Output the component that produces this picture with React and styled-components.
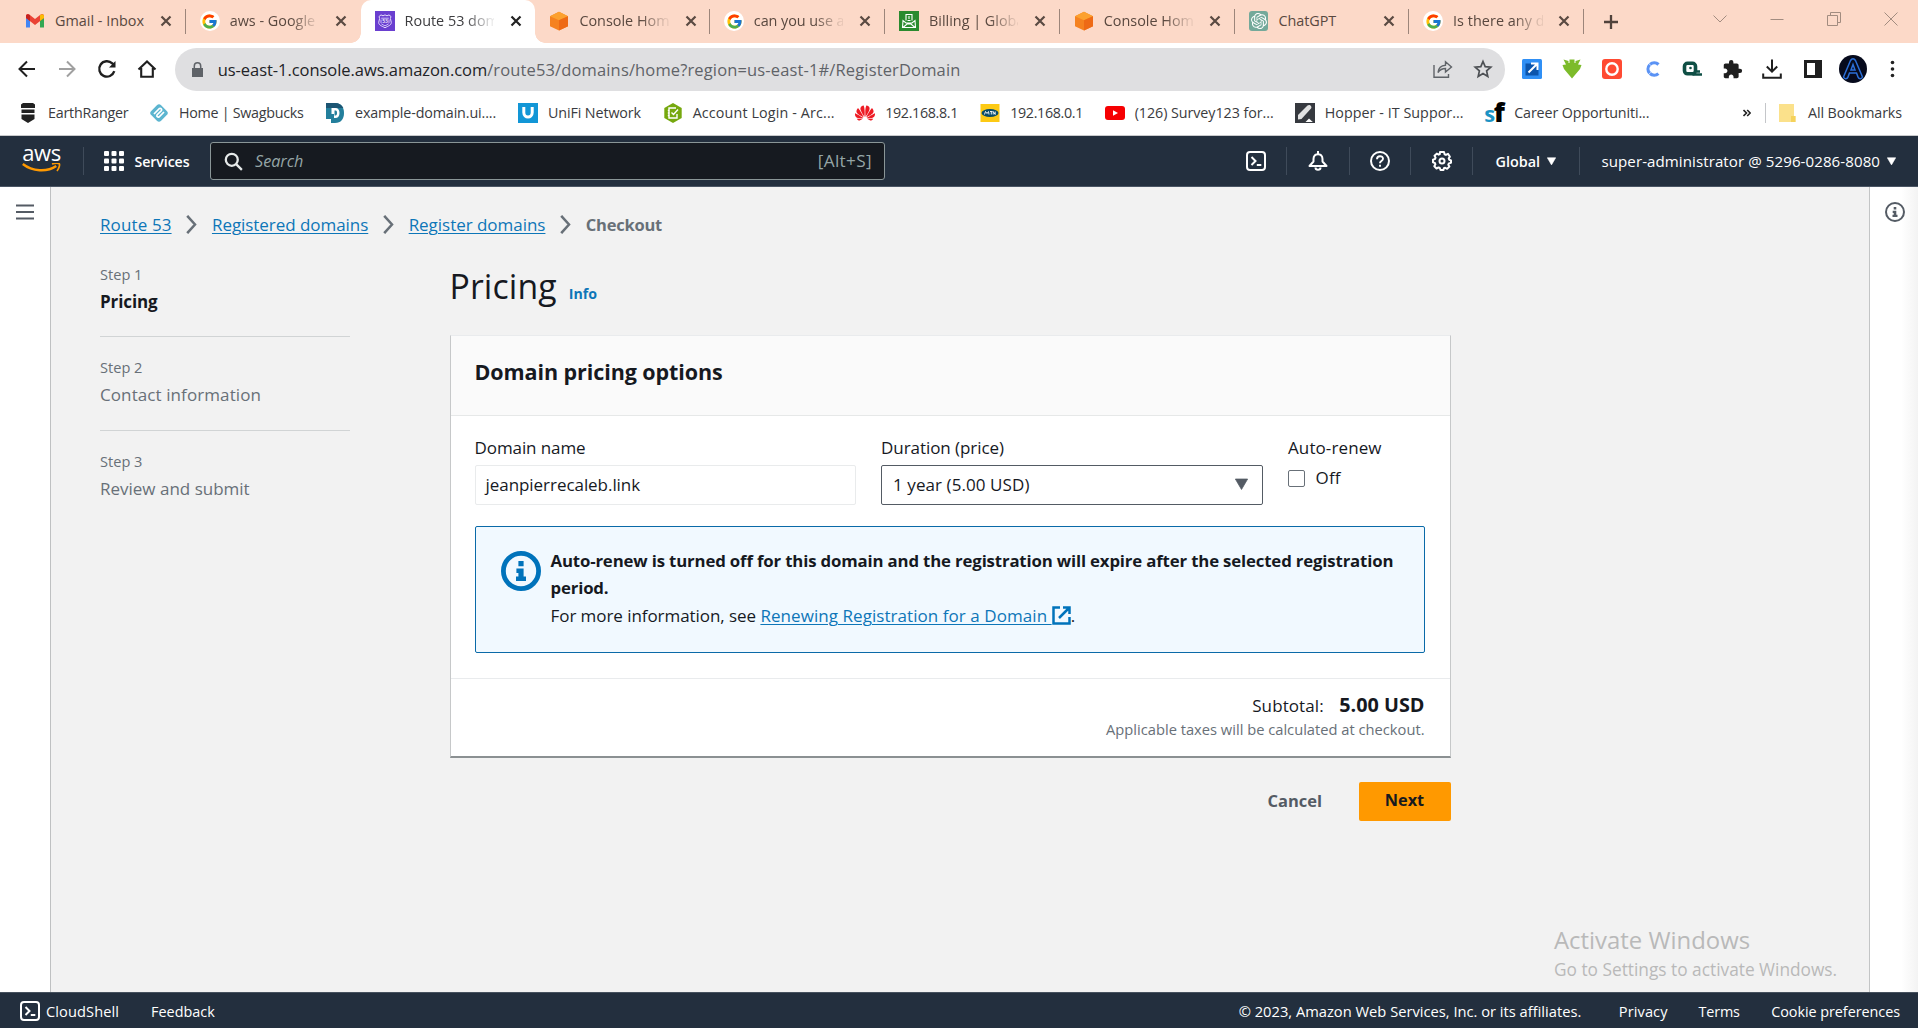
import React from 'react';
import styled, { createGlobalStyle, css } from 'styled-components';
import { FcGoogle } from 'react-icons/fc';
import { SiOpenai, SiHuawei } from 'react-icons/si';
import { MdExtension } from 'react-icons/md';

const Global = createGlobalStyle`
  * { box-sizing: border-box; }
  body { margin: 0; overflow: hidden; font-family: "Open Sans", "Noto Sans", sans-serif; }
  svg { display: block; flex: none; }
`;

const Screen = styled.div`
  width: 1918px;
  height: 1028px;
  display: flex;
  flex-direction: column;
  background: #f2f2f2;
  color: #16191f;
`;

const Text = styled.span`
  font-size: ${(p) => p.$size || 17}px;
  font-weight: ${(p) => p.$weight || 400};
  letter-spacing: ${(p) => p.$ls || 0}px;
  color: ${(p) => p.$color || 'inherit'};
  white-space: pre;
`;

/* ---------- tab strip ---------- */
const TabStrip = styled.div`
  height: 43px;
  flex: none;
  display: flex;
  padding-left: 11px;
  background: #fcd9c8;
`;

const Tab = styled.div`
  position: relative;
  width: 174.8px;
  height: 43px;
  display: flex;
  align-items: center;
  padding: 0 10px 1px 14px;
  color: #59483f;
  ${(p) =>
    p.$active &&
    css`
      background: #fff;
      border-radius: 10px 10px 0 0;
      color: #3c3c3f;
      &::before, &::after {
        content: '';
        position: absolute;
        bottom: 0;
        width: 10px;
        height: 10px;
      }
      &::before { left: -10px; background: radial-gradient(circle at 0 0, transparent 9.5px, #fff 10px); }
      &::after { right: -10px; background: radial-gradient(circle at 100% 0, transparent 9.5px, #fff 10px); }
    `}
  ${(p) =>
    p.$divider &&
    css`
      &::after {
        content: '';
        position: absolute;
        right: 0;
        top: 9px;
        width: 1px;
        height: 25px;
        background: #9c857a;
      }
    `}
`;

const TabTitle = styled.div`
  width: 89.5px;
  margin-left: 10px;
  font-size: 14.4px;
  line-height: 24px;
  letter-spacing: ${(p) => p.$ls || 0}px;
  white-space: nowrap;
  ${(p) => p.$fade && css`mask-image: linear-gradient(90deg, #000 68%, rgba(0, 0, 0, 0.12) 97%);`}
`;

const TabClose = styled.div`
  width: 20px;
  margin-left: 12px;
  display: flex;
  justify-content: center;
  color: ${(p) => (p.$active ? '#222' : '#5a4a42')};
`;

const NewTab = styled.div`
  width: 54px;
  display: flex;
  align-items: center;
  justify-content: center;
  color: #50423b;
`;

const WindowButtons = styled.div`
  margin-left: auto;
  margin-right: -1px;
  height: 37px;
  display: flex;
`;

const WindowButton = styled.div`
  width: 57px;
  display: flex;
  align-items: center;
  justify-content: center;
  color: #a28c80;
`;

/* ---------- toolbar ---------- */
const Toolbar = styled.div`
  height: 52px;
  flex: none;
  display: flex;
  align-items: center;
  padding-left: 7px;
  background: #fff;
`;

const Slot = styled.div`
  width: 40.05px;
  height: 40px;
  display: flex;
  align-items: center;
  justify-content: center;
`;

const AddressBar = styled.div`
  width: 1330px;
  height: 43px;
  margin: 0 7.5px 0 7.500px;
  display: flex;
  align-items: center;
  padding: 0 2px 0 17px;
  border-radius: 22px;
  background: #dfdfe1;
`;

const Address = styled.div`
  flex: 1;
  margin-left: 15px;
  font-size: 16.5px;
  color: #5f6368;
  white-space: nowrap;
  letter-spacing: 0.14px;
`;

const Host = styled.span`
  color: #222327;
  letter-spacing: -0.05px;
`;

/* ---------- bookmarks ---------- */
const Bookmarks = styled.div`
  height: 41px;
  flex: none;
  display: flex;
  align-items: center;
  padding: 0 16px 5px 18px;
  background: #fff;
  border-bottom: 1px solid #c9cacc;
`;

const Bookmark = styled.div`
  width: ${(p) => p.$width}px;
  display: flex;
  align-items: center;
  gap: 10px;
  color: #3a3b40;
`;

const BookmarkEnd = styled.div`
  margin-left: auto;
  display: flex;
  align-items: center;
  color: #3a3b40;
`;

const Rule = styled.div`
  width: 1px;
  height: ${(p) => p.$h}px;
  margin: ${(p) => p.$m || 0};
  background: ${(p) => p.$color};
`;

const SfLogo = styled.div`
  width: 20px;
  font: 700 22px/20px "Open Sans", sans-serif;
  letter-spacing: -1.5px;
  color: #1b93c4;
  white-space: nowrap;
  b { color: #000; font-size: 27px; letter-spacing: 0; }
`;

/* ---------- console header ---------- */
const ConsoleHeader = styled.header`
  height: 51px;
  flex: none;
  display: flex;
  align-items: center;
  background: #232f3e;
  border-bottom: 1px solid #4a5564;
  color: #fff;
`;

const AwsLogo = styled.div`
  width: 39px;
  margin-left: 22px;
  display: flex;
  flex-direction: column;
  align-items: center;
  span { font-size: 22px; line-height: 15px; font-weight: 500; letter-spacing: -0.4px; transform: translateY(-3px); }
`;

const Services = styled.div`
  width: 86px;
  margin-left: 19.5px;
  display: flex;
  align-items: center;
  gap: 11px;
`;

const Search = styled.div`
  width: 675px;
  height: 38px;
  margin-left: 20.5px;
  display: flex;
  align-items: center;
  padding: 0 12px 0 13px;
  border: 1px solid #8a9697;
  border-radius: 3px;
  background: #161a20;
  color: #95a5a6;
  i { flex: 1; margin-left: 12px; font-size: 16.2px; }
  span, i { margin-top: -1px; }
`;

const HeaderTools = styled.div`
  margin-left: auto;
  display: flex;
  align-items: center;
`;

const Tool = styled.div`
  width: ${(p) => p.$width}px;
  display: flex;
  align-items: center;
  justify-content: center;
  gap: 7px;
`;

/* ---------- page ---------- */
const Page = styled.div`
  flex: 1;
  display: flex;
  min-height: 0;
`;

const Rail = styled.aside`
  width: ${(p) => (p.$right ? 49 : 51)}px;
  flex: none;
  display: flex;
  justify-content: center;
  padding-top: ${(p) => (p.$right ? 15 : 17)}px;
  ${(p) =>
    p.$right
      ? css`
          padding-left: 2px;
          border-left: 1px solid #c3c5c6;
          background: linear-gradient(90deg, #fff 65%, #f3f3f3 100%);
        `
      : css`
          border-right: 1px solid #bfc1c2;
          background: #fff;
        `}
`;

const Content = styled.main`
  flex: 1;
  padding: 24px 0 0 49px;
`;

const Breadcrumbs = styled.nav`
  height: 26px;
  display: flex;
  align-items: center;
  gap: 14.7px;
`;

const Link = styled.a`
  color: #0d76b8;
  letter-spacing: ${(p) => p.$ls || 0}px;
  text-decoration: underline;
  text-decoration-thickness: 1px;
  text-underline-offset: 2px;
  white-space: pre;
  font-size: 17px;
`;

const Columns = styled.div`
  display: flex;
`;

const Steps = styled.ol`
  width: 250px;
  margin: 23.5px 0 0;
  padding: 0;
  list-style: none;
`;

const Step = styled.li`
  padding-top: ${(p) => (p.$first ? 0 : 16.5)}px;
  height: ${(p) => (p.$first ? 76.5 : 94)}px;
  border-bottom: ${(p) => (p.$last ? 0 : 1)}px solid #d1d4d5;
  display: flex;
  flex-direction: column;
  span { line-height: 27.5px; }
`;

const Main = styled.section`
  width: 1001px;
  margin-left: 99.5px;
`;

const Title = styled.div`
  height: 97.5px;
  padding-top: 27px;
  display: flex;
  align-items: baseline;
  gap: 12px;
  line-height: 45px;
`;

const Card = styled.div`
  height: 423px;
  display: flex;
  flex-direction: column;
  background: #fff;
  border: 1px solid #c6c8c9;
  border-top-color: #e9ebed;
  border-bottom: 2px solid #8b9092;
`;

const CardHeader = styled.div`
  height: 80px;
  display: flex;
  align-items: center;
  padding: 0 24px 7px;
  background: #fafafa;
  border-bottom: 1px solid #e6e8e8;
`;

const Fields = styled.div`
  display: flex;
  gap: 25px;
  padding: 18.5px 24px 0;
`;

const Field = styled.div`
  width: ${(p) => p.$width}px;
  display: flex;
  flex-direction: column;
  > span { line-height: 27px; }
`;

const Input = styled.div`
  height: 40px;
  margin-top: 4px;
  display: flex;
  align-items: center;
  justify-content: space-between;
  padding: 0 14px 1px ${(p) => (p.$select ? 11 : 10)}px;
  border: 1px solid ${(p) => (p.$select ? '#545b64' : '#e9ebec')};
  border-radius: 2px;
`;

const Check = styled.div`
  display: flex;
  align-items: center;
  gap: 10.5px;
  height: 27px;
  margin-top: 3px;
`;

const CheckBox = styled.div`
  width: 17px;
  height: 17px;
  border: 1px solid #687078;
  border-radius: 2px;
  margin-top: 2px;
`;

const Alert = styled.div`
  height: 127px;
  margin: 20.5px 24.5px 25px 24px;
  display: flex;
  gap: 10px;
  padding: 20px 25px;
  background: #f1f9ff;
  border: 1px solid #0a6aa8;
  border-radius: 2px;
  > svg { margin-top: 4px; }
`;

const AlertBody = styled.div`
  display: flex;
  flex-direction: column;
  span, a { line-height: 27.5px; }
`;

const AlertLine = styled.div`
  display: flex;
  align-items: center;
  height: 27.5px;
`;

const CardFooter = styled.div`
  flex: 1;
  display: flex;
  flex-direction: column;
  align-items: flex-end;
  padding: 12.5px 25px 0;
  border-top: 1px solid #e9ebed;
`;

const Total = styled.div`
  display: flex;
  align-items: baseline;
  gap: 15.5px;
  height: 28px;
  line-height: 28px;
`;

const Actions = styled.div`
  margin-top: 24px;
  display: flex;
  justify-content: flex-end;
  align-items: center;
  gap: 36.5px;
  > span { margin-top: -2px; }
`;

const NextButton = styled.button`
  width: 92px;
  height: 39px;
  padding: 0 0 2px;
  border: 0;
  border-radius: 2px;
  background: #ff9900;
  font: 700 16.3px "Open Sans", sans-serif;
  color: #16191f;
`;

const Watermark = styled.div`
  position: absolute;
  left: 1554px;
  top: 923px;
  display: flex;
  flex-direction: column;
  gap: 2px;
  color: #b9b9b9;
`;

const Footer = styled.footer`
  height: 36px;
  flex: none;
  display: flex;
  align-items: center;
  padding: 1px 18px 0 20px;
  background: #232f3e;
  border-top: 1px solid #46515e;
  color: #fff;
`;

/* ---------- drawings ---------- */
const Ico = ({ s = 20, vb = 20, c = 'currentColor', w = 2, children, ...r }) => (
  <svg width={s} height={s} viewBox={`0 0 ${vb} ${vb}`} fill="none" stroke={c} strokeWidth={w} {...r}>
    {children}
  </svg>
);

const Gmail = () => (
  <Ico stroke="none">
    <path d="M1 5v11.500h4V9z" fill="#4285f4" />
    <path d="M19 5v11.500h-4V9z" fill="#34a853" />
    <path d="M1 5.200C1 3 3 2.600 4.300 3.600L10 8l5.700-4.400C17 2.600 19 3 19 5.200V7l-9 7-9-7z" fill="#ea4335" />
    <path d="M1 5.200C1 3.400 3 2.600 5 4.200V10L1 7z" fill="#c5221f" />
    <path d="M19 5.200c0-1.800-2-2.600-4-1V10l4-3z" fill="#fbbc04" />
  </Ico>
);
const GoogleBadge = styled.div`
  width: 20px;
  height: 20px;
  border-radius: 50%;
  background: #fff;
  display: flex;
  align-items: center;
  justify-content: center;
`;
const Google = () => <GoogleBadge><FcGoogle size={17} /></GoogleBadge>;
const Route53 = () => (
  <Ico stroke="none">
    <rect width="20" height="20" fill="#6a3fd0" />
    <path d="M4 5.500l2-1.600 2 .9 2-.9 2 .9 2-.9 2 1.600-.6 2 .9 4c0 2.800-3.300 3.500-6.300 5.300-3-1.800-6.300-2.500-6.300-5.300l.9-4z" fill="none" stroke="#e4dafc" strokeWidth="1" />
    <path d="M6.200 7.200h7.600M6.400 12.800c1 1 2.400 1.200 3.600 2 1.200-.8 2.600-1 3.600-2M6 8.500v3.500M14 8.500v3.500" fill="none" stroke="#d9ccff" strokeWidth=".9" />
    <text x="10" y="12" textAnchor="middle" fontSize="5" fontWeight="600" fill="#fff">53</text>
  </Ico>
);
const Cube = () => (
  <Ico stroke="none">
    <path d="M10 .8l9 4.400v10L10 19.500l-9-4.300v-10z" fill="#f58220" />
    <path d="M10 .8l9 4.400-9 4-9-4z" fill="#fca12f" />
    <path d="M19 5.200v10l-9 4.300V9.200z" fill="#ee6a16" />
  </Ico>
);
const Billing = () => (
  <Ico c="#fff" w={1.100}>
    <rect width="20" height="20" fill="#2a8a2e" stroke="none" />
    <path d="M7 9.500V3.500h6v6M4 9.500l-.5 7h13l-.5-7-3 2.500H7zM4 16.500l4-3.500h4l4 3.500M8.500 9.500h3M10 5v3" />
  </Ico>
);
const ChatBadge = styled.div`
  width: 20px;
  height: 20px;
  border-radius: 3px;
  background: #74a99a;
  color: #fff;
  display: flex;
  align-items: center;
  justify-content: center;
`;
const Chat = () => <ChatBadge><SiOpenai size={16} /></ChatBadge>;

const Ranger = () => (
  <Ico stroke="none"><path d="M3 1.500L5 0h10l2 1.500V5H3zM3.500 6.500h13V10h-13zM3.500 11.500h13V16L10 20l-6.500-4z" fill="#222" /></Ico>
);
const Swag = () => (
  <Ico c="#fff" w={1.700}>
    <rect x="3" y="3" width="14" height="14" rx="3" transform="rotate(45 10 10)" fill="#5cb5d0" stroke="none" />
    <path d="M5 11l5.500-5.500a1.500 1.500 0 012 2L8 12a1.500 1.500 0 002 2l5-5" />
  </Ico>
);
const DLogo = () => (
  <Ico stroke="none">
    <path d="M1 0h9c6 0 9 4 9 10s-3 10-9 10H6v-4H1z" fill="#237f9c" />
    <path d="M1 0h9c4 0 7 2 8.300 5H1z" fill="#1c5573" />
    <path d="M6.500 5h3.800c3 0 4.200 2 4.200 5s-1.500 5-4.200 5H9v-4H6.500z" fill="#fff" />
    <path d="M9.500 7.500h1.200c1 0 1.300 1 1.300 2.500s-.5 2.500-1.500 2.500h-1z" fill="#237f9c" />
  </Ico>
);
const Unifi = () => (
  <Ico c="#fff" w={3}><rect width="20" height="20" fill="#1296d6" stroke="none" /><path d="M5.800 4v5.500c0 6 8.400 6 8.400 0V4" /></Ico>
);
const Arc = () => (
  <Ico c="#fff" w={1.400}>
    <path d="M10 0l8.700 5v10L10 20l-8.700-5V5z" fill="#76a80e" stroke="none" />
    <path d="M13 5H6v10h8v-4M4.800 7.500h2M4.800 10h2M4.800 12.500h2M8.500 9.500l2 2L15 6.500" />
  </Ico>
);
const Mtn = () => (
  <Ico stroke="none">
    <rect x=".5" y="1" width="19" height="18" fill="#fdca14" />
    <ellipse cx="10" cy="10" rx="8.500" ry="4" fill="#0a4c6a" />
    <path d="M4.500 11.500l1-3 1.500 2 1.500-2 .5 3M10 8.500h2.500M11.300 8.500v3M13.200 11.500v-3l2 3v-3" stroke="#fff" strokeWidth=".9" fill="none" />
  </Ico>
);
const Tube = () => (
  <Ico stroke="none"><rect y="3" width="20" height="14" rx="3" fill="#f60002" /><path d="M8 7.200v5.600l5-2.800z" fill="#fff" /></Ico>
);
const Hopper = () => (
  <Ico stroke="none">
    <rect width="20" height="20" fill="#36393f" />
    <path d="M3 12L12.500 2.500c2-1.800 5 .8 3.500 3L6.500 16 3 16.500z" fill="#e2e2e2" />
    <path d="M10.500 19l3.500-3.500 3.800 3.500z" fill="#fff" />
  </Ico>
);
const Folder = () => (
  <Ico stroke="none"><path d="M2 1h15v12h1.500v6H2z" fill="#fbe18b" /><path d="M14 13h4.500v6H14z" fill="#f5d25b" /></Ico>
);

const Cross = () => <Ico s={12} vb={12} w={2.200}><path d="M1.500 1.500l9 9M10.500 1.500l-9 9" /></Ico>;
const ShellIcon = () => (
  <Ico w={2}><rect x="1" y="1" width="18" height="18" rx="3" /><path d="M5.500 6l4 4-4 4M10.800 14h4.500" /></Ico>
);
const Caret = ({ s = 9, c = '#fff' }) => <Ico s={s} vb={10} stroke="none"><path d="M.3.8h9.400L5 8.800z" fill={c} stroke={c} strokeWidth=".6" strokeLinejoin="round" /></Ico>;
const InfoIcon = ({ s, c, w = 2 }) => (
  <Ico s={s} c={c} w={w}>
    <circle cx="10" cy="10" r={10 - w / 2} />
    <path d="M8.700 5h2.600v2.600H8.700zM7.700 8.800h3.600v4h1.200V15H7.500v-2.200h1.200v-1.800h-1z" fill={c} stroke="none" />
  </Ico>
);
const BreadArrow = () => <svg width="11" height="19" viewBox="0 0 11 19" fill="none" stroke="#687078" strokeWidth="2.500"><path d="M1.200 .8l7.800 8.700-7.800 8.700" /></svg>;

const tabs = [
  [Gmail, 'Gmail - Inbox', 0],
  [Google, 'aws - Google', 0, true],
  [Route53, 'Route 53 dom', 0, true],
  [Cube, 'Console Hom', 0, true],
  [Google, 'can you use a', -0.05, true],
  [Billing, 'Billing | Globa', 0, true],
  [Cube, 'Console Hom', 0, true],
  [Chat, 'ChatGPT', -0.05],
  [Google, 'Is there any d', 0.05, true],
];

const bookmarks = [
  [Ranger, 'EarthRanger', 131, -0.21],
  [Swag, 'Home | Swagbucks', 176, -0.28],
  [DLogo, 'example-domain.ui....', 193, -0.13],
  [Unifi, 'UniFi Network', 144.7, -0.11],
  [Arc, 'Account Login - Arc...', 192.500, 0.14],
  [() => <SiHuawei size={20} color="#ee1b24" />, '192.168.8.1', 125, -0.34],
  [Mtn, '192.168.0.1', 124.5, -0.34],
  [Tube, '(126) Survey123 for...', 190, -0.06],
  [Hopper, 'Hopper - IT Suppor...', 189.500, 0.05],
  [() => <SfLogo>s<b>f</b></SfLogo>, 'Career Opportuniti...', 180, -0.12],
];

const steps = [
  ['Step 1', 'Pricing', -0.1],
  ['Step 2', 'Contact information', 0.09],
  ['Step 3', 'Review and submit', 0],
];

export default function App() {
  return (
    <Screen>
      <Global />
      <TabStrip>
        {tabs.map(([Icon, title, ls, fade], i) => (
          <Tab key={i} $active={i === 2} $divider={i !== 1 && i !== 2}>
            <Icon />
            <TabTitle $ls={ls} $fade={fade}>{title}</TabTitle>
            <TabClose $active={i === 2}><Cross /></TabClose>
          </Tab>
        ))}
        <NewTab><Ico s={16} vb={16} w={2.300}><path d="M8 1v14M1 8h14" /></Ico></NewTab>
        <WindowButtons>
          <WindowButton><Ico s={14} vb={14} w={1}><path d="M.5 3.500L7 10l6.500-6.500" /></Ico></WindowButton>
          <WindowButton><Ico s={14} vb={14} w={1}><path d="M.5 7.500h13" /></Ico></WindowButton>
          <WindowButton><Ico s={14} vb={14} w={1}><path d="M.5 3.500h10v10H.5zM3.500 3.500v-3h10v10h-3" /></Ico></WindowButton>
          <WindowButton><Ico s={14} vb={14} w={1}><path d="M.5.5l13 13M13.500.5l-13 13" /></Ico></WindowButton>
        </WindowButtons>
      </TabStrip>

      <Toolbar>
        <Slot><Ico c="#1f1f1f"><path d="M18 10H3M10 2.500L2.500 10l7.500 7.500" /></Ico></Slot>
        <Slot><Ico c="#a0a0a0"><path d="M2 10h15M10 2.500l7.500 7.500-7.500 7.500" /></Ico></Slot>
        <Slot><Ico c="#1f1f1f" w={2.300}><path d="M17.300 12.200a7.700 7.700 0 11-2-7.800l2 2" /><path d="M18.500 2v6.500H12z" fill="#1f1f1f" stroke="none" /></Ico></Slot>
        <Slot><Ico c="#1f1f1f" w={2.100}><path d="M1.500 10.500L10 2.500l8.500 8M4.200 9v8.700h11.600V9" /></Ico></Slot>
        <AddressBar>
          <svg width="11" height="15" viewBox="0 0 11 15"><path d="M0 6h11v9H0z" fill="#5f6368" /><path d="M2.300 6V4a3.200 3.200 0 016.400 0v2" fill="none" stroke="#5f6368" strokeWidth="1.500" /></svg>
          <Address><Host>us-east-1.console.aws.amazon.com</Host>/route53/domains/home?region=us-east-1#/RegisterDomain</Address>
          <Slot><Ico c="#5f6368" w={1.400}><path d="M1 6v12.300h14.500V15M5 13.500c.5-4.500 3-7 7.500-7.300V2.700L18.500 8l-6 5v-3.500c-3 0-5.500 1-7.500 4z" /></Ico></Slot>
          <Slot><Ico c="#4d5054" w={1.700}><path d="M10 2.500l2.200 5.200 5.600.5-4.200 3.700 1.200 5.500L10 14.500l-4.800 2.900 1.200-5.500-4.200-3.700 5.600-.5z" /></Ico></Slot>
        </AddressBar>
        <Slot><Ico stroke="none"><rect width="20" height="20" rx="1.500" fill="#2f8ff5" /><path d="M3.500 4.500h8l5 4v8h-13z" fill="#0b55ad" /><path d="M6.500 13.500l8-8M9 4.500h6.500V11" stroke="#fff" strokeWidth="2" /></Ico></Slot>
        <Slot><Ico stroke="none"><path d="M1.500 .5l5 1.500v2L7.500 4V.5h5V4l1 0V2l5-1.500-2.500 5 3.500.5-1.500 4L10 19.500 2 10 .5 6 4 5.500z" fill="#7cbb2a" /></Ico></Slot>
        <Slot><Ico c="#fff" w={2.400}><rect width="20" height="20" rx="3" fill="#ff4a32" stroke="none" /><circle cx="10" cy="10" r="5.700" /></Ico></Slot>
        <Slot><Ico c="#5b93f5" w={3.200}><path d="M16.500 5.500a6.200 6.200 0 100 9" strokeDasharray="9 .5" /></Ico></Slot>
        <Slot><Ico c="#0f4f45" w={3.600}><rect x="2.500" y="4.300" width="11" height="10.500" rx="3" /><path d="M10.500 15.500h9.500M15 12.500h3" strokeWidth="2.600" /><circle cx="8.500" cy="9" r="1.300" fill="#0f4f45" stroke="none" /></Ico></Slot>
        <Slot><MdExtension size={21} color="#1f1f1f" /></Slot>
        <Slot><Ico c="#1f1f1f" w={2}><path d="M10 .5v12M4.800 7.500l5.200 5.200 5.200-5.200M1.200 14.500v4.300h17.600v-4.300" /></Ico></Slot>
        <Slot><Ico stroke="none"><path d="M1 1h18v18H1zM4 4v12h8V4z" fillRule="evenodd" fill="#1f1f1f" /></Ico></Slot>
        <Slot>
          <Ico s={28} vb={28} w={1.500} c="#2b6fd8"><circle cx="14" cy="14" r="14" fill="#060a1c" stroke="none" /><path d="M4.500 22L11.500 5.500C13 3 15 3 16.500 5.500L23.500 22c-1 2.500-4 2-4.500 0l-1.500-4h-7L9 22c-.5 2-3.500 2.500-4.500 0zM14 9.500l-2 5.500h4z" /></Ico>
        </Slot>
        <Slot><Ico stroke="none"><circle cx="9.500" cy="3.500" r="1.800" fill="#222" /><circle cx="9.500" cy="10" r="1.800" fill="#222" /><circle cx="9.500" cy="16.500" r="1.800" fill="#222" /></Ico></Slot>
      </Toolbar>

      <Bookmarks>
        {bookmarks.map(([Icon, label, width, ls]) => (
          <Bookmark key={label} $width={width}><Icon /><Text $size={14.3} $ls={ls}>{label}</Text></Bookmark>
        ))}
        <BookmarkEnd>
          <Ico s={8} vb={8} w={1.600} c="#222"><path d="M.5 1l3 3-3 3M4.200 1l3 3-3 3" /></Ico>
          <Rule $h={20} $m="0 11px 0 14px" $color="#c4c6c9" />
          <Folder />
          <Rule $h={1} $m="0 5px" $color="transparent" />
          <Text $size={14.3} $ls={-0.1}>All Bookmarks</Text>
        </BookmarkEnd>
      </Bookmarks>

      <ConsoleHeader>
        <AwsLogo>
          <span>aws</span>
          <svg width="39" height="11" viewBox="0 0 39 11" fill="none" stroke="#ff9900"><path d="M.8 1c9.500 7.500 24 8.500 33.500 2" strokeWidth="2.400" /><path d="M30 1c3-.9 6.500-1 7.300-.2.700 1-.2 4.700-2.300 7.200" strokeWidth="1.700" /></svg>
        </AwsLogo>
        <Rule $h={28} $m="0 0 0 22px" $color="#3f4b5a" />
        <Services>
          <Ico stroke="none" fill="#fff">{[0, 7.5, 15].map((y) => [0, 7.5, 15].map((x) => <rect key={`${x}-${y}`} x={x} y={y} width="5" height="5" rx="1" />))}</Ico>
          <Text $size={14.2} $weight={600} $ls={-0.1}>Services</Text>
        </Services>
        <Search>
          <Ico s={19} w={2.400} c="#e6eaea"><circle cx="8.200" cy="8.200" r="6.300" /><path d="M12.800 12.800l6 6" /></Ico>
          <i>Search</i>
          <Text $size={17.2} $ls={0.35}>[Alt+S]</Text>
        </Search>
        <HeaderTools>
          <Tool $width={61}><ShellIcon /></Tool><Rule $h={28} $color="#3f4b5a" />
          <Tool $width={61.5}><Ico><path d="M1.500 15h17l-4-4.500V8C14.500 1.500 5.500 1.500 5.500 8v2.500zM10 0v3" strokeLinejoin="round" /><path d="M7.500 16.500c0 3 5 3 5 0" /></Ico></Tool><Rule $h={28} $color="#3f4b5a" />
          <Tool $width={60.5}><Ico><circle cx="10" cy="10" r="9" /><path d="M7 8.200c0-4 6-3.800 6-.4 0 2.200-3 2.200-3 4.200v.3M10 13.700v2" strokeWidth="1.900" /></Ico></Tool><Rule $h={28} $color="#3f4b5a" />
          <Tool $width={61}>
            <Ico strokeLinejoin="round"><path d="M8 1h4l.6 2.300 1.300.6L16 2.800 17.900 5.700l-1.200 1.700.5 1.300 1.800.7v2.400l-2.100.6-.6 1.300 1.100 1.900-2.300 2.200-1.900-1-1.300.5L11.500 19h-3l-.7-2-1.300-.6-2 1.100-2.200-2.200 1.100-2-.5-1.300L1 11.400V8.600L3 8l.6-1.300L2.500 4.800l2.300-2.200 1.900 1.100 1.100-.5z" /><circle cx="10" cy="10" r="2.500" /></Ico>
          </Tool><Rule $h={28} $color="#3f4b5a" />
          <Tool $width={105.5}><Text $size={14.400} $weight={600}>Global</Text><Caret /></Tool><Rule $h={28} $color="#3f4b5a" />
          <Tool $width={338.5}><Text $size={15.1} $weight={500} $ls={0.07}>super-administrator @ 5296-0286-8080</Text><Caret /></Tool>
        </HeaderTools>
      </ConsoleHeader>

      <Page>
        <Rail><svg width="18" height="16" viewBox="0 0 18 16" fill="none" stroke="#545b64" strokeWidth="2.200"><path d="M0 1.500h18M0 8h18M0 14.500h18" /></svg></Rail>
        <Content>
          <Breadcrumbs>
            <Link $ls={0.12}>Route 53</Link><BreadArrow />
            <Link $ls={-0.05}>Registered domains</Link><BreadArrow />
            <Link $ls={-0.03}>Register domains</Link><BreadArrow />
            <Text $size={16.5} $weight={700} $ls={-0.23} $color="#687078">Checkout</Text>
          </Breadcrumbs>
          <Columns>
            <Steps>
              {steps.map(([n, label, ls], i) => (
                <Step key={n} $first={i === 0} $last={i === 2}>
                  <Text $size={14.6} $color="#687078">{n}</Text>
                  <Text $size={17} $ls={ls} $weight={i === 0 ? 700 : 400} $color={i === 0 ? '#16191f' : '#687078'}>{label}</Text>
                </Step>
              ))}
            </Steps>
            <Main>
              <Title>
                <Text $size={33.8} $ls={0.1}>Pricing</Text>
                <Text $size={14.2} $weight={700} $color="#0d76b8">Info</Text>
              </Title>
              <Card>
                <CardHeader><Text $size={21.5} $weight={700} $ls={-0.08}>Domain pricing options</Text></CardHeader>
                <Fields>
                  <Field $width={381.5}>
                    <Text $ls={-0.09}>Domain name</Text>
                    <Input><Text $ls={-0.05}>jeanpierrecaleb.link</Text></Input>
                  </Field>
                  <Field $width={382}>
                    <Text $ls={-0.06}>Duration (price)</Text>
                    <Input $select><Text $ls={0.08}>1 year (5.00 USD)</Text><Caret s={13} c="#545b64" /></Input>
                  </Field>
                  <Field $width={137}>
                    <Text $ls={0.1}>Auto-renew</Text>
                    <Check><CheckBox /><Text $ls={0.2}>Off</Text></Check>
                  </Field>
                </Fields>
                <Alert>
                  <InfoIcon s={40} c="#0073bb" w={2.400} />
                  <AlertBody>
                    <Text $size={16.8} $weight={700} $ls={-0.155}>Auto-renew is turned off for this domain and the registration will expire after the selected registration</Text>
                    <Text $size={16.8} $weight={700} $ls={-0.16}>period.</Text>
                    <AlertLine>
                      <Text $ls={-0.06}>For more information, see </Text>
                      <Link $ls={0.06}>Renewing Registration for a Domain </Link>
                      <Ico s={19} vb={19} w={2.500} c="#0073bb"><path d="M8 1.500H1.500v16h16V11M7 12L17 2M11 1.500h6.500V8" /></Ico>
                      <Text>.</Text>
                    </AlertLine>
                  </AlertBody>
                </Alert>
                <CardFooter>
                  <Total><Text $ls={0.1}>Subtotal:</Text><Text $size={19.8} $weight={700}>5.00 USD</Text></Total>
                  <Text $size={14.700} $color="#687078">Applicable taxes will be calculated at checkout.</Text>
                </CardFooter>
              </Card>
              <Actions>
                <Text $size={16.5} $weight={700} $color="#545b64">Cancel</Text>
                <NextButton>Next</NextButton>
              </Actions>
            </Main>
          </Columns>
        </Content>
        <Rail $right><InfoIcon s={20} c="#545b64" /></Rail>
      </Page>

      <Footer>
        <ShellIcon />
        <Rule $h={1} $m="0 5px 0 0" $color="transparent" />
        <Text $size={14.6} $weight={500} $ls={0.1}>CloudShell</Text>
        <Rule $h={1} $m="0 0 0 31px" $color="transparent" />
        <Text $size={14.4} $weight={500}>Feedback</Text>
        <Rule $h={1} $m="0 auto" $color="transparent" />
        <Text $size={14.700} $weight={500}>© 2023, Amazon Web Services, Inc. or its affiliates.</Text>
        <Rule $h={1} $m="0 0 0 36.5px" $color="transparent" />
        <Text $size={14.6} $weight={500} $ls={0.1}>Privacy</Text>
        <Rule $h={1} $m="0 0 0 30px" $color="transparent" />
        <Text $size={14.4} $weight={500} $ls={-0.2}>Terms</Text>
        <Rule $h={1} $m="0 0 0 30.5px" $color="transparent" />
        <Text $size={14.4} $weight={500} $ls={-0.05}>Cookie preferences</Text>
      </Footer>
      <Watermark>
        <Text $size={23.9}>Activate Windows</Text>
        <Text $size={17.3}>Go to Settings to activate Windows.</Text>
      </Watermark>
    </Screen>
  );
}
